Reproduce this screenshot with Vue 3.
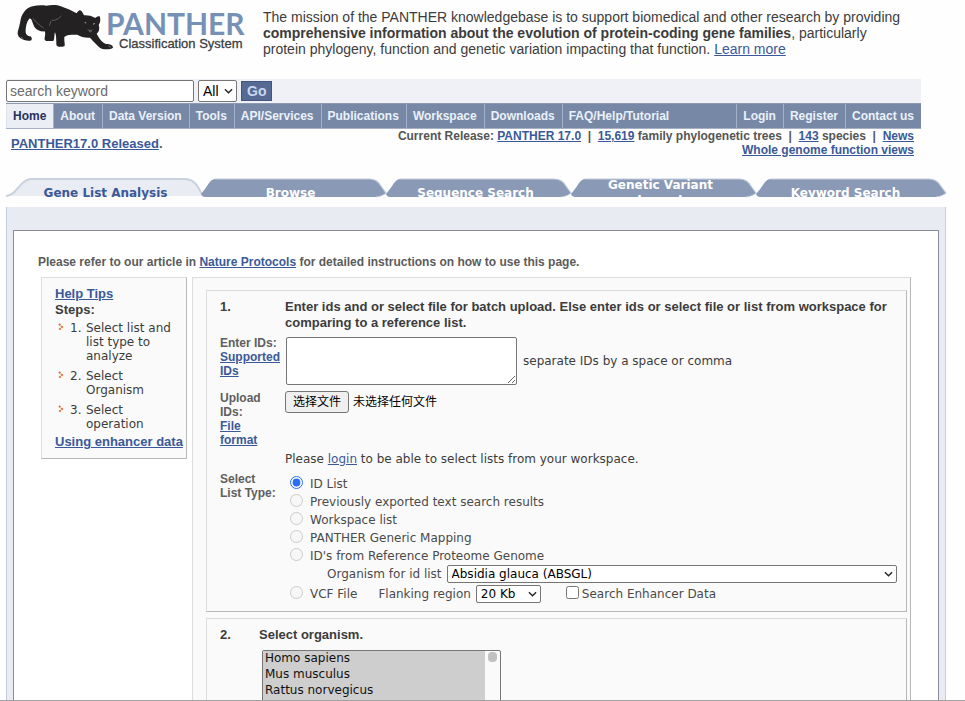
<script setup>
import { ref } from 'vue'

const leftNav = ['Home', 'About', 'Data Version', 'Tools', 'API/Services', 'Publications', 'Workspace', 'Downloads', 'FAQ/Help/Tutorial']
const rightNav = ['Login', 'Register', 'Contact us']
const tabs = ['Gene List Analysis', 'Browse', 'Sequence Search', 'Genetic Variant Impact', 'Keyword Search']
const steps = ['Select list and list type to analyze', 'Select Organism', 'Select operation']
const listTypes = ['ID List', 'Previously exported text search results', 'Workspace list', 'PANTHER Generic Mapping', "ID's from Reference Proteome Genome"]
const organisms = ['Homo sapiens', 'Mus musculus', 'Rattus norvegicus', 'Gallus gallus', 'Danio rerio', 'Drosophila melanogaster', 'Caenorhabditis elegans', 'Saccharomyces cerevisiae']
const listType = ref('ID List')
const selected = ref([...organisms])
</script>

<template>
  <div class="shell">
    <header class="top">
      <a class="logo" href="#" aria-label="PANTHER Classification System">
        <svg viewBox="0 0 260 60" class="logo-art">
          <g transform="scale(.3333)">
            <path fill="#242122" d="M98 19 C82 22 68 36 62 58 C60 70 58 80 55 89 C51 98 53 109 62 115 C70 121 86 125 94 121 C97 117 95 111 91 109 C84 108 77 104 77 95 C77 82 80 64 88 56 C96 54 97 70 103 80 C110 91 122 95 134 94 C138 101 133 113 134 119 C138 125 147 123 160 123 C164 119 162 108 165 97 C170 107 168 127 170 137 C177 142 190 141 194 138 C195 130 192 122 193 111 C200 103 218 104 232 104 C242 111 256 114 270 113 C281 125 295 141 305 146 C317 149 333 148 339 143 C339 136 331 132 319 132 C306 128 298 115 290 101 C299 94 299 84 296 75 C302 67 302 57 299 49 C293 49 289 51 286 54 C273 46 259 45 252 46 C247 37 245 30 239 31 C233 33 232 38 230 40 C215 33 204 26 190 22 C174 13 153 15 139 17 C124 15 110 16 98 19 Z" />
            <path fill="none" stroke="#77797d" stroke-width="2" d="M99 55 C108 67 120 77 131 84 M155 61 C166 63 178 55 184 47 M153 63 L148 77" />
            <path fill="#d5d8dc" d="M254 66 l6 3 -5 1 Z M279 71 l7 -2 -5 5 Z" />
            <path fill="none" stroke="#898c90" stroke-width="2" d="M263 89 q7 5 14 1 M267 94 q5 3 8 0 M62 111 l8 5 M325 138 l8 4" />
          </g>
          <text x="106" y="35" class="logo-name">PANTHER</text>
          <text x="119" y="48" class="logo-sub">Classification System</text>
        </svg>
      </a>
      <p class="mission">The mission of the PANTHER knowledgebase is to support biomedical and other research by providing <b>comprehensive information about the evolution of protein-coding gene families</b>, particularly protein phylogeny, function and genetic variation impacting that function. <a href="#">Learn more</a></p>
    </header>

    <div class="bars">
      <form class="search" @submit.prevent>
        <input class="keyword" type="text" placeholder="search keyword" aria-label="search keyword">
        <span class="pick scope">
          <select aria-label="Search scope"><option>All</option></select>
          <svg viewBox="0 0 10 6"><path d="M1 1 5 5 9 1" /></svg>
        </span>
        <button class="go" type="submit">Go</button>
      </form>
      <nav class="nav">
        <a v-for="(n, i) in leftNav" :key="n" href="#" :class="{ current: i === 0 }">{{ n }}</a>
        <span class="spacer"></span>
        <a v-for="n in rightNav" :key="n" class="right" href="#">{{ n }}</a>
      </nav>
      <div class="news">
        <p class="released"><a href="#">PANTHER17.0 Released</a>.</p>
        <p class="release">Current Release: <a href="#">PANTHER 17.0</a> &nbsp;|&nbsp; <a href="#">15,619</a> family phylogenetic trees &nbsp;|&nbsp; <a href="#">143</a> species &nbsp;|&nbsp; <a href="#">News</a><br><a href="#">Whole genome function views</a></p>
      </div>
    </div>

    <nav class="tabs">
      <a v-for="(t, i) in tabs" :key="t" href="#" class="tab" :class="{ active: i === 0, long: t.length > 20 }">
        <svg v-if="i === 0" class="tab-shape" viewBox="0 0 199 20" preserveAspectRatio="none">
          <path fill="#e9ecf2" d="M0 19 Q6 19 10 13 L16 6 Q21 1 26 1 H182 Q189 1 194 8 L200 19 Z" />
          <path fill="none" stroke="#c9d1df" stroke-width="2" d="M0 19 Q6 18 10 13 L16 6 Q21 1 26 1 H182 Q189 1 194 8 L199 17" />
        </svg>
        <svg v-else class="tab-shape" viewBox="0 0 184 19" preserveAspectRatio="none">
          <path fill="#8a9ab6" d="M0 16 Q5 10 8 5 Q11 1 14 1 H168 Q175 1 179 8 L184 15 Q181 18 174 19 H4 Q1 19 0 16 Z" />
          <path fill="none" stroke="#c3cddd" d="M14 1 H168 Q175 1 179 8 L184 15 Q181 18 174 19" />
        </svg>
        <span>{{ t }}</span>
      </a>
    </nav>

    <main class="frame">
      <div class="panel">
        <p class="article">Please refer to our article in <a href="#">Nature Protocols</a> for detailed instructions on how to use this page.</p>
        <div class="columns">
          <aside class="tips">
            <a href="#">Help Tips</a>
            <h2>Steps:</h2>
            <ul>
              <li v-for="(s, i) in steps" :key="s">
                <svg viewBox="0 0 6 8"><path d="M1 1 4 4 1 7" /></svg>
                <span>{{ i + 1 }}.</span><span>{{ s }}</span>
              </li>
            </ul>
            <a href="#">Using enhancer data</a>
          </aside>

          <form class="steps" @submit.prevent>
            <section class="card first">
              <h3>1.</h3>
              <h3>Enter ids and or select file for batch upload. Else enter ids or select file or list from workspace for comparing to a reference list.</h3>

              <div class="tag ids-tag"><label for="ids">Enter IDs:</label><br><a href="#">Supported IDs</a></div>
              <div class="ids"><textarea id="ids"></textarea><span>separate IDs by a space or comma</span></div>

              <div class="tag"><label for="file">Upload IDs:</label><br><a href="#">File<br>format</a></div>
              <div class="upload">
                <input id="file" type="file" aria-label="选择文件">
                <label for="file" class="file-button">选择文件</label>
                <span>未选择任何文件</span>
              </div>

              <p class="login">Please <a href="#">login</a> to be able to select lists from your workspace.</p>

              <div class="tag type-tag">Select<br>List Type:</div>
              <div class="types">
                <label v-for="(t, i) in listTypes" :key="t" class="radio">
                  <input v-model="listType" type="radio" name="type" :value="t" :disabled="i > 0"><span>{{ t }}</span>
                </label>
                <div class="organism">
                  <label for="organism">Organism for id list</label>
                  <span class="pick wide">
                    <select id="organism"><option>Absidia glauca (ABSGL)</option></select>
                    <svg viewBox="0 0 10 6"><path d="M1 1 5 5 9 1" /></svg>
                  </span>
                </div>
                <div class="vcf">
                  <label class="radio"><input v-model="listType" type="radio" name="type" value="VCF File" disabled><span>VCF File</span></label>
                  <label for="flank" class="flank">Flanking region</label>
                  <span class="pick">
                    <select id="flank"><option>20 Kb</option></select>
                    <svg viewBox="0 0 10 6"><path d="M1 1 5 5 9 1" /></svg>
                  </span>
                  <label class="enhancer"><input type="checkbox"><span>Search Enhancer Data</span></label>
                </div>
              </div>
            </section>

            <section class="card second">
              <h3>2.</h3>
              <h3><label for="species">Select organism.</label></h3>
              <div class="listbox">
                <select id="species" v-model="selected" multiple size="8">
                  <option v-for="o in organisms" :key="o">{{ o }}</option>
                </select>
                <span class="track"><span class="thumb"></span></span>
              </div>
            </section>
          </form>
        </div>
      </div>
    </main>
  </div>
</template>

<style>
body { margin: 0; background: #fefefe; }
</style>

<style scoped>
* { box-sizing: border-box; }
p, h2, h3, ul { margin: 0; padding: 0; }
a { color: #3b5998; }
.shell {
  height: 100vh;
  overflow: auto;
  scrollbar-width: none;
  border-bottom: 1px solid #a2a2a2;
  padding: 0 19px 0 6px;
  font: 12px/14px "Liberation Sans", "Noto Sans CJK SC", sans-serif;
  color: #3c3c3c;
}
.top { display: flex; height: 79px; }
.logo { flex: none; width: 257px; }
.logo-art { display: block; width: 260px; height: 60px; margin-left: -6px; }
.logo-name { font: 700 30px Lato, sans-serif; fill: #7691b5; }
.logo-sub { font: 13px "Liberation Sans", sans-serif; fill: #3c3e42; stroke: #3c3e42; stroke-width: .3px; }
.mission { max-width: 650px; padding-top: 9px; font-size: 14px; line-height: 16px; }
.bars { margin-right: 25px; }
.search { display: flex; align-items: center; gap: 4px; height: 24px; background: #f0f1f6; }
.keyword {
  width: 188px; height: 22px; padding: 0 3px;
  border: 1px solid #767676; border-radius: 2px;
  font: 14px "Liberation Sans", sans-serif; background: #fff;
}
.keyword::placeholder { color: #6b6b6b; }
.pick { position: relative; display: inline-flex; }
.pick select {
  appearance: none; width: 65px; height: 18px; padding: 0 4px;
  border: 1px solid #767676; border-radius: 2px; background: #fff; color: #000;
  font: 12px "DejaVu Sans", sans-serif;
}
.pick svg { position: absolute; right: 4px; top: 50%; width: 9px; height: 6px; margin-top: -3px; pointer-events: none; }
.pick path { fill: none; stroke: #222; stroke-width: 1.5; }
.pick.scope select { width: 39px; height: 22px; font: 14px "Liberation Sans", sans-serif; }
.pick.wide { flex: 1; }
.pick.wide select { width: 100%; }
.go {
  height: 20px; padding: 0 5px; border: 1px solid #43557c; background: #566a94; color: #c9d6ee;
  font: bold 14px/16px "Liberation Sans", sans-serif;
}
.nav { display: flex; height: 26px; background: #7788a6; border-top: 1px solid #8d9ab2; border-bottom: 1px solid #a5b0c6; }
.nav a { padding: 0 7px 0 6px; line-height: 24px; font-weight: bold; color: #eaf1fc; text-decoration: none; border-left: 1px solid #a3b1cb; }
.nav a.current { background: #ebeef5; color: #27325c; border-left-color: #dde1ea; }
.spacer { flex: 1; border-left: 0; }
.news { display: flex; justify-content: space-between; font-weight: bold; color: #555; height: 49px; }
.released { padding: 7px 0 0 5px; font-size: 13px; line-height: 16px; }
.release { padding: 0 7px 0 0; text-align: right; }

.tabs { display: flex; height: 20px; padding: 0 8px 0 7px; }
.tab {
  position: relative; flex: 1; height: 19px; color: #fff;
  font: bold 12px/14px "DejaVu Sans", sans-serif; text-align: center; text-decoration: none;
}
.tab-shape { position: absolute; left: 3px; top: 0; width: 100%; height: 19px; overflow: visible; }
.tab:last-child .tab-shape { width: calc(100% + 5px); }
.tab span { position: relative; display: block; height: 19px; padding: 8px 20px 0; overflow: hidden; }
.tab.long span { padding: 0 30px; line-height: 15px; }
.tab.active { color: #3b5998; }
.tab.active .tab-shape { left: -7px; width: calc(100% + 11px); }
.tab.active span { overflow: visible; }

.frame { margin-top: 9px; padding: 23px 6px 0; border: 1px solid #c6cbdd; border-bottom: 0; border-top: 0; background: #e8ebf2; }
.panel { background: #fff; border: 1px solid #8b8a9f; border-bottom: 0; padding: 23px 27px 0 24px; }
.article { font-weight: bold; color: #5b5b5b; line-height: 16px; }
.columns { display: flex; align-items: flex-start; gap: 5px; margin: 7px 0 0 3px; }
.tips, .steps, .card { border: 1px solid; border-color: #ddd #b8b8b8 #b8b8b8 #ddd; background: #fafafa; }
.tips { flex: none; width: 146px; padding: 8px 0 8px 13px; font-size: 13px; line-height: 16px; white-space: nowrap; }
.tips > a { font-weight: bold; }
.tips h2 { font-size: 13px; line-height: 16px; }
.tips ul { display: flex; flex-direction: column; gap: 6px; margin: 3px 0; list-style: none; }
.tips li { display: flex; font: 12px/14px "DejaVu Sans", sans-serif; padding-right: 12px; white-space: normal; }
.tips li svg { flex: none; width: 6px; height: 8px; margin: 2px 6px 0 3px; }
.tips li path { fill: none; stroke: #e0703c; stroke-width: 2; stroke-dasharray: 2 1; }
.tips li span:nth-of-type(1) { flex: none; width: 16px; }
.steps { flex: 1; min-width: 0; padding: 12px 3px 0 13px; }
.card { padding: 8px 9px 8px 13px; }
.card h3 { font-size: 13px; line-height: 16px; }
.first { display: grid; grid-template-columns: 61px 1fr; column-gap: 4px; }
.tag { font-weight: bold; color: #5f5f5f; }
.ids-tag { padding-top: 5px; }
.type-tag { padding-top: 6px; }
.ids { display: flex; align-items: center; gap: 6px; padding: 6px 0 6px 1px; font-family: "DejaVu Sans", sans-serif; }
textarea { width: 231px; height: 48px; border: 1px solid #767676; border-radius: 2px; background: #fff; }
.upload { position: relative; display: flex; align-items: flex-start; gap: 4px; font-size: 12px; line-height: 20px; color: #000; }
.upload input { position: absolute; width: 64px; height: 22px; opacity: 0; }
.upload span { padding-top: 1px; }
.file-button { padding: 0 7px; border: 1px solid #767676; border-radius: 3px; background: #efefef; }
.login { grid-column: 2; padding-top: 5px; font: 12px/14px "DejaVu Sans", sans-serif; }
.types { font: 12px/18px "DejaVu Sans", sans-serif; padding-top: 9px; color: #4a4a4a; }
.radio { display: flex; align-items: center; height: 18px; gap: 7px; }
.radio input { width: 13px; height: 13px; margin: 0 0 3px 5px; accent-color: #2b6ef0; }
.organism { display: flex; align-items: center; gap: 5px; padding-left: 42px; }
.vcf { display: flex; align-items: center; margin-top: 2px; }
.flank { margin: 0 5px 0 21px; }
.enhancer { display: flex; align-items: center; gap: 3px; margin-left: 25px; }
.enhancer input { width: 13px; height: 13px; margin: 0 0 3px; }
.second { display: grid; grid-template-columns: 39px 1fr; margin-top: 6px; }
.listbox {
  grid-column: 2; display: flex; width: 239px; height: 132px; margin: 7px 0 0 3px; overflow: hidden;
  border: 1px solid #767676; border-radius: 2px; background: #fafafa;
}
.listbox select { flex: 1; min-width: 0; padding: 0; border: 0; border-radius: 0; background: #cecece; font: 12px "DejaVu Sans", sans-serif; }
.listbox option { padding: 0 2px; min-height: 16px; line-height: 16px; color: #111; background: #cecece linear-gradient(#cecece, #cecece); }
.track { flex: none; width: 15px; padding: 1px 3px; }
.thumb { display: block; height: 10px; border-radius: 4px; background: #c1c1c1; }
</style>
